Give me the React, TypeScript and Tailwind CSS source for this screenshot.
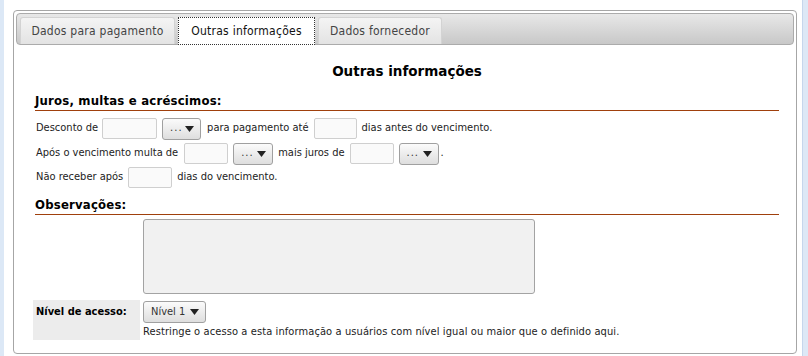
import React from "react";

const font = { fontFamily: '"DejaVu Sans Condensed", "DejaVu Sans", Verdana, sans-serif' };
const wide = { fontFamily: '"DejaVu Sans", Verdana, sans-serif' };

function Input({ w }: { w: number }) {
  return (
    <span
      className="inline-block h-[21px] rounded-[2px] border border-[#cfcfcf] bg-[#fafafa] shrink-0"
      style={{ width: w }}
    />
  );
}

function Select({ w, label, dots }: { w: number; label: string; dots?: boolean }) {
  return (
    <span
      className="inline-flex h-[22px] items-center justify-between rounded-[3px] border border-[#a0a0a0] bg-gradient-to-b from-[#fbfbfb] to-[#dedede] pl-[7px] pr-[6px] text-[11px] text-[#333] shrink-0"
      style={{ width: w }}
    >
      <span className={dots ? "tracking-[1px]" : ""}>{label}</span>
      <svg width="9" height="6" viewBox="0 0 9 6">
        <path d="M0 0 H9 L4.5 6 Z" fill="#222" />
      </svg>
    </span>
  );
}

function Tab({ label, active, w }: { label: string; active?: boolean; w: number }) {
  return active ? (
    <div
      className="flex h-[28px] items-center justify-center border border-dotted border-[#333] bg-white text-[12px] tracking-[0.25px] text-[#111] -mb-[1px]"
      style={{ width: w }}
    >
      {label}
    </div>
  ) : (
    <div
      className="flex h-[27px] items-center justify-center rounded-t-[3px] border border-b-0 border-[#d3d3d3] bg-gradient-to-b from-[#f4f4f4] to-[#e3e3e3] text-[12px] tracking-[0.25px] text-[#444]"
      style={{ width: w }}
    >
      {label}
    </div>
  );
}

export default function App() {
  return (
    <div className="flex h-[356px] w-[808px] overflow-hidden bg-white" style={font}>
      <div className="w-[4px] bg-[#dce8f6]" />
      <div className="flex-1 pl-[9px] pr-[5px] pt-[10px]">
        <div className="h-[344px] w-[784px] rounded-[4px] border border-[#a6a6a6] p-[2px] pt-[2px]">
          <div className="flex h-[32px] items-end gap-[3px] rounded-[4px] border border-[#ababab] bg-gradient-to-b from-[#e8e8e8] to-[#c8c8c8] pl-[3px]">
            <Tab label="Dados para pagamento" w={155} />
            <Tab label="Outras informações" active w={137} />
            <Tab label="Dados fornecedor" w={124} />
          </div>
          <div className="pl-[19px] pr-[15px] text-[11px] text-[#222]">
            <div
              className="mt-[18px] text-center text-[13.5px] font-bold text-black leading-[17px]"
              style={wide}
            >
              Outras informações
            </div>
            <div className="mt-[13px] border-b border-[#a0400c] pb-[1px] text-[13px] font-bold leading-[16px] tracking-[0.2px] text-black">
              Juros, multas e acréscimos:
            </div>
            <div className="mt-[7px] flex h-[21px] items-center gap-[5px] pl-[1px]">
              <span className="mr-[-1px]">Desconto de</span>
              <Input w={55} />
              <Select w={39} label="..." dots />
              <span className="ml-[1px]">para pagamento até</span>
              <Input w={43} />
              <span>dias antes do vencimento.</span>
            </div>
            <div className="mt-[4px] flex h-[21px] items-center gap-[5px] pl-[1px]">
              <span className="mr-[1px]">Após o vencimento multa de</span>
              <Input w={44} />
              <Select w={40} label="..." dots />
              <span>mais juros de</span>
              <Input w={44} />
              <Select w={40} label="..." dots />
              <span className="-ml-[3px]">.</span>
            </div>
            <div className="mt-[3px] flex h-[21px] items-center gap-[5px] pl-[1px]">
              <span>Não receber após</span>
              <Input w={44} />
              <span>dias do vencimento.</span>
            </div>
            <div className="mt-[9px] border-b border-[#a0400c] pb-[1px] text-[13px] font-bold leading-[16px] tracking-[0.2px] text-black">
              Observações:
            </div>
            <div className="mt-[4px] flex">
              <div className="w-[108px] shrink-0" />
              <div className="h-[75px] w-[392px] rounded-[3px] border border-[#a3a3a3] bg-[#f1f1f1]" />
            </div>
            <div className="mt-[6px] flex -ml-[2px]">
              <div className="h-[40px] w-[107px] shrink-0 bg-[#ececec] pl-[3px] pt-[4px] text-[11px] font-bold text-black">
                Nível de acesso:
              </div>
              <div className="pl-[3px] pt-[1px]">
                <Select w={63} label="Nível 1" />
                <div className="mt-[2px] leading-[13px] tracking-[0.1px]">
                  Restringe o acesso a esta informação a usuários com nível igual ou maior que o definido aqui.
                </div>
              </div>
            </div>
          </div>
        </div>
      </div>
      <div className="w-[6px] border-l border-[#c6d6ec] bg-[#dde8f6]" />
    </div>
  );
}
